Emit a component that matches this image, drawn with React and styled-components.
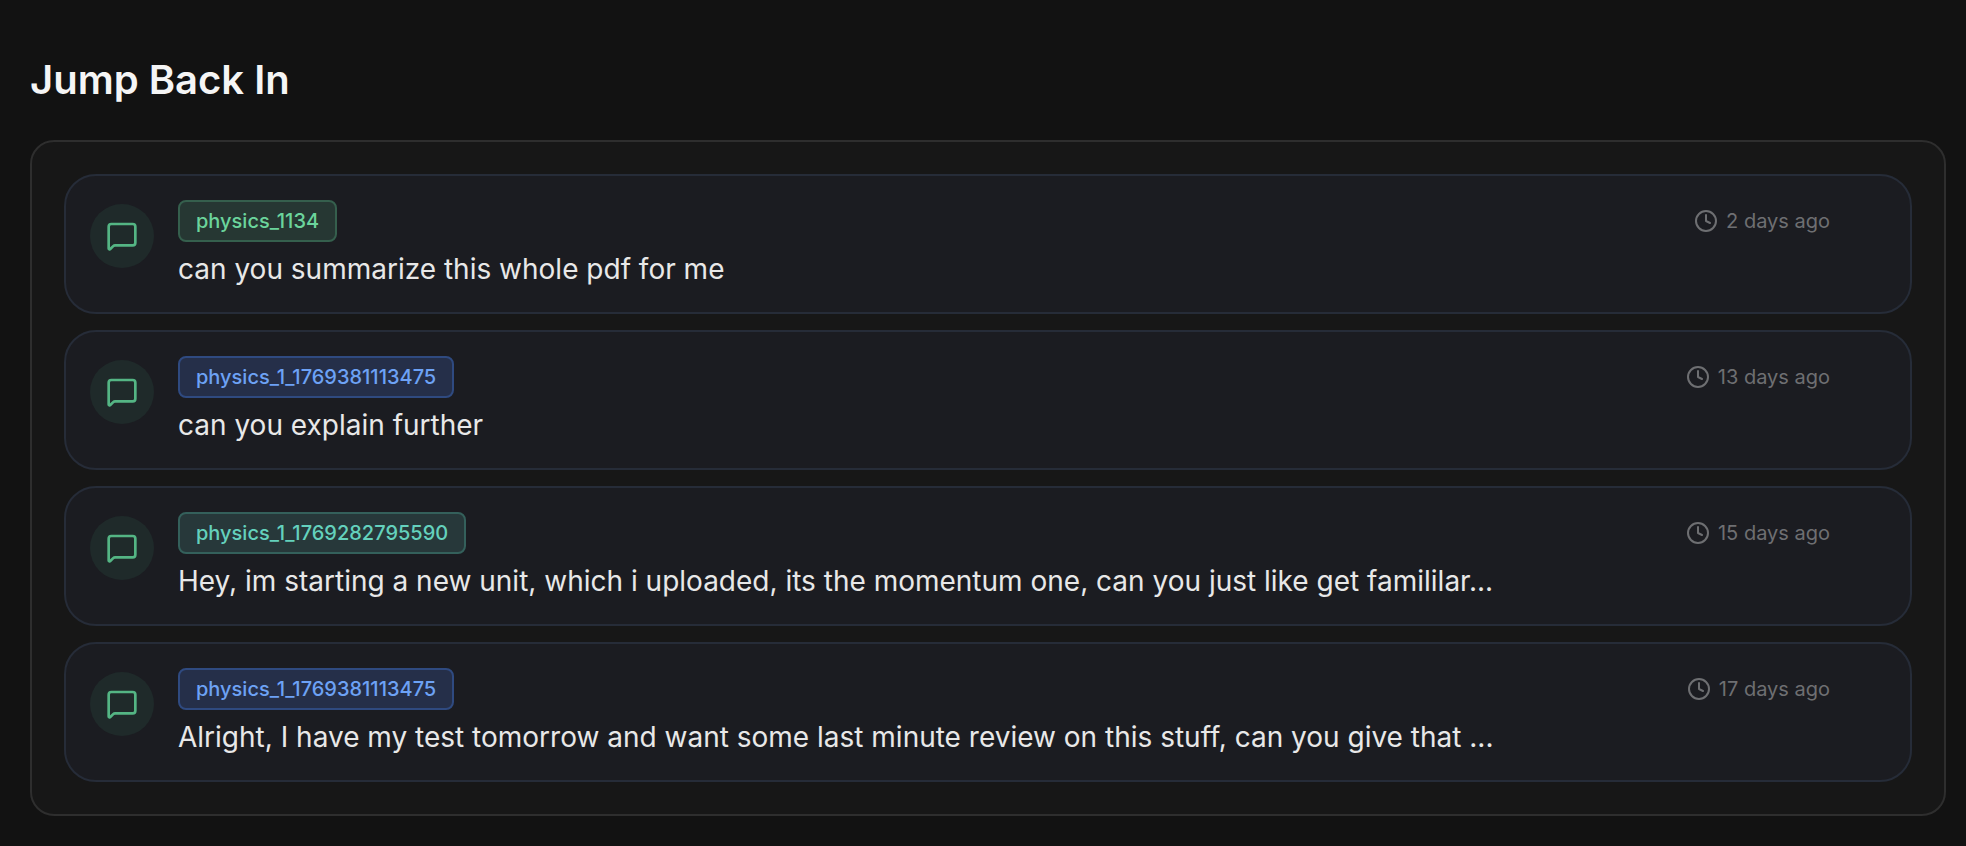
import styled, { createGlobalStyle } from 'styled-components';
import { Clock, MessageSquare } from 'lucide-react';

const GlobalStyle = createGlobalStyle`
  * {
    box-sizing: border-box;
  }

  body {
    margin: 0;
    background-color: #121212;
    font-family: Inter, "Liberation Sans", sans-serif;
  }
`;

const Section = styled.section`
  padding: 56px 20px 28px 30px;
`;

const Title = styled.h2`
  margin: 0 0 36px;
  font-size: 40px;
  line-height: 48px;
  font-weight: 600;
  color: #f5f5f5;
`;

const Panel = styled.ul`
  display: flex;
  flex-direction: column;
  gap: 16px;
  margin: 0;
  padding: 32px;
  list-style: none;
  background-color: #171717;
  border: 2px solid #2e2e2e;
  border-radius: 24px;
`;

const ChatRow = styled.a`
  display: flex;
  align-items: flex-start;
  gap: 24px;
  padding: 24px 80px 24px 24px;
  background-color: #1b1c21;
  border: 2px solid #262c38;
  border-radius: 32px;
  color: inherit;
  text-decoration: none;

  &:hover {
    background-color: #202127;
  }
`;

const IconCircle = styled.span`
  display: flex;
  flex-shrink: 0;
  align-items: center;
  justify-content: center;
  width: 64px;
  height: 64px;
  margin-top: 4px;
  border-radius: 50%;
  background-color: #1f2a2a;
  color: #54b584;
`;

const Content = styled.div`
  flex: 1;
  min-width: 0;
`;

const Meta = styled.div`
  display: flex;
  align-items: center;
  justify-content: space-between;
  margin-bottom: 8px;
`;

const tones = {
  green: { text: '#6bd49c', background: '#263733', border: '#355f4d' },
  blue: { text: '#6da2f5', background: '#252f49', border: '#2f4a80' },
  teal: { text: '#64d1bd', background: '#27383a', border: '#34605b' },
};

const Badge = styled.span`
  padding: 7px 16px;
  font-size: 20px;
  line-height: 24px;
  font-weight: 500;
  color: ${({ $tone }) => tones[$tone].text};
  background-color: ${({ $tone }) => tones[$tone].background};
  border: 2px solid ${({ $tone }) => tones[$tone].border};
  border-radius: 8px;
`;

const Time = styled.span`
  display: flex;
  align-items: center;
  gap: 8px;
  font-size: 20px;
  line-height: 24px;
  color: #6e6f72;
`;

const Message = styled.p`
  margin: 0;
  overflow: hidden;
  font-size: 28px;
  line-height: 38px;
  color: #e8e8e8;
  text-overflow: ellipsis;
  white-space: nowrap;
`;

const chats = [
  {
    id: 1,
    space: 'physics_1134',
    tone: 'green',
    time: '2 days ago',
    message: 'can you summarize this whole pdf for me',
  },
  {
    id: 2,
    space: 'physics_1_1769381113475',
    tone: 'blue',
    time: '13 days ago',
    message: 'can you explain further',
  },
  {
    id: 3,
    space: 'physics_1_1769282795590',
    tone: 'teal',
    time: '15 days ago',
    message: 'Hey, im starting a new unit, which i uploaded, its the momentum one, can you just like get famililar...',
  },
  {
    id: 4,
    space: 'physics_1_1769381113475',
    tone: 'blue',
    time: '17 days ago',
    message: 'Alright, I have my test tomorrow and want some last minute review on this stuff, can you give that ...',
  },
];

export default function App() {
  return (
    <>
      <GlobalStyle />
      <Section>
        <Title>Jump Back In</Title>
        <Panel>
          {chats.map((chat) => (
            <li key={chat.id}>
              <ChatRow href={`#chat-${chat.id}`}>
                <IconCircle>
                  <MessageSquare size={32} />
                </IconCircle>
                <Content>
                  <Meta>
                    <Badge $tone={chat.tone}>{chat.space}</Badge>
                    <Time>
                      <Clock size={24} />
                      {chat.time}
                    </Time>
                  </Meta>
                  <Message>{chat.message}</Message>
                </Content>
              </ChatRow>
            </li>
          ))}
        </Panel>
      </Section>
    </>
  );
}
